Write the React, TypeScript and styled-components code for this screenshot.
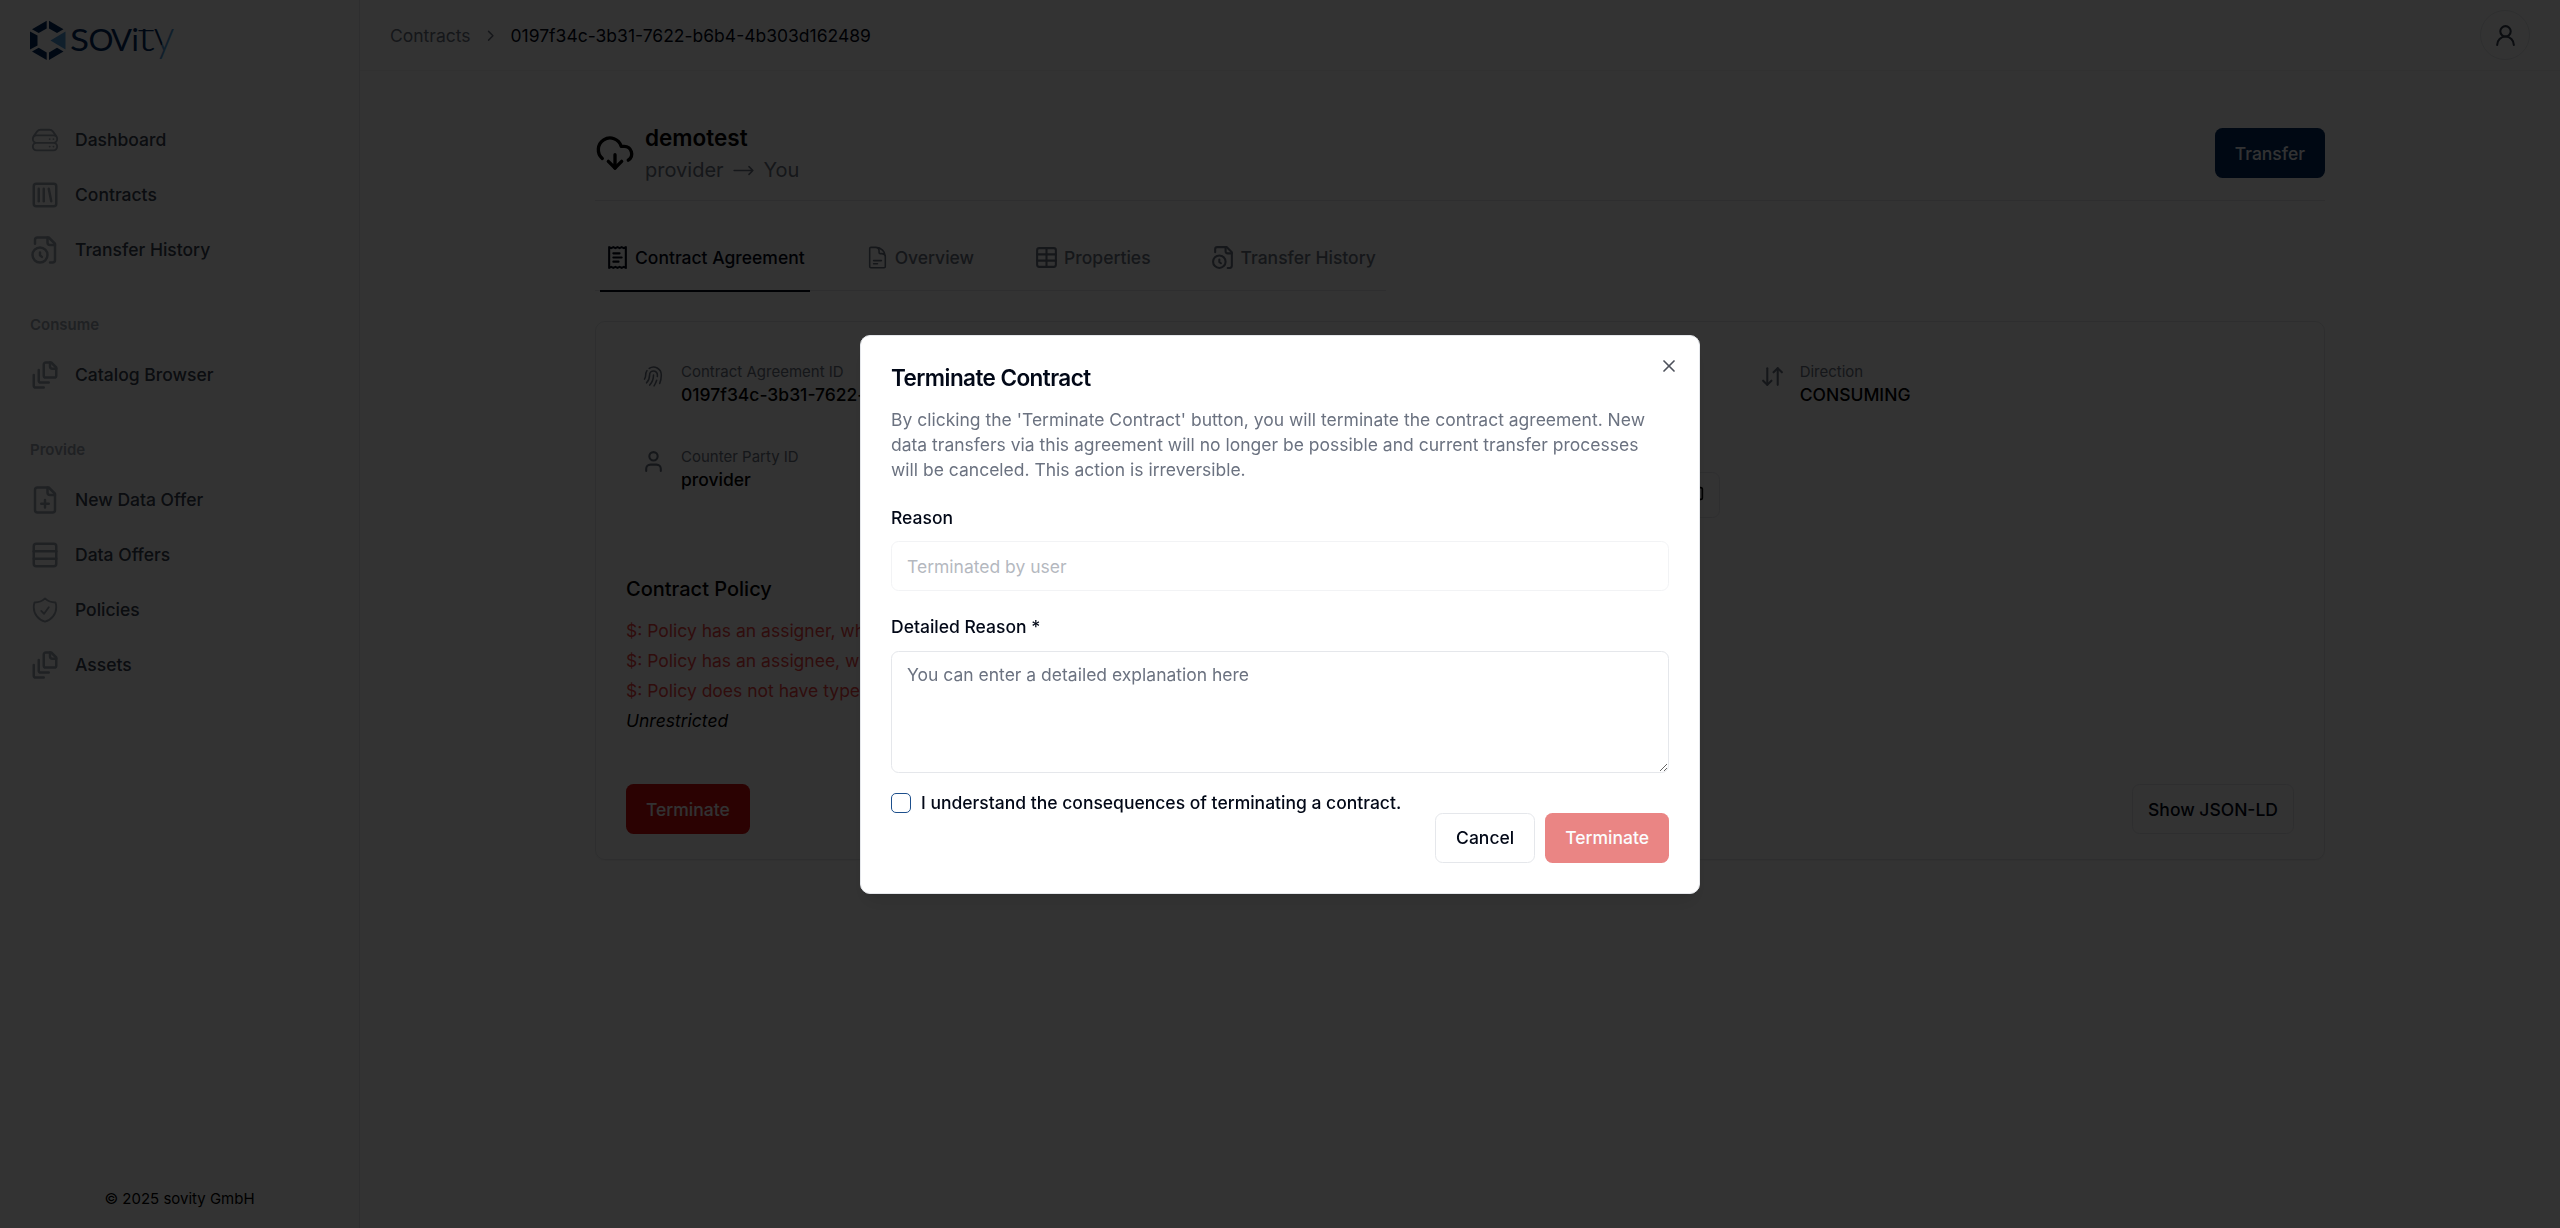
import React from "react";
import styled, { createGlobalStyle, css } from "styled-components";
import {
  ArrowDownUp,
  ChevronRight,
  CloudDownload,
  Copy,
  Rows3,
  SquareLibrary,
  Table,
  User,
  UserRound,
  X,
} from "lucide-react";
import {
  HiOutlineArrowLongRight,
  HiOutlineDocumentText,
  HiOutlineFingerPrint,
  HiOutlineShieldCheck,
} from "react-icons/hi2";

const ink = "#020817";
const muted = "#6b7280";
const line = "#e5e7eb";
const navy = "#002a5e";
const sky = "#4f9ad8";
const danger = "#d50c0a";

const GlobalStyle = createGlobalStyle`
  *, *::before, *::after { box-sizing: border-box; }
  html, body { margin: 0; height: 100%; background: #fff; }
  body {
    font-family: Inter, "Liberation Sans", sans-serif;
    font-size: 17.5px;
    line-height: 25px;
    color: #000;
    overflow: hidden;
  }
  h1, h2, h3, p { margin: 0; font: inherit; }
  button, input, textarea { font: inherit; margin: 0; }
`;

/* ---------- icons ---------- */

const StrokeSvg = ({
  size,
  weight = 2,
  children,
}: {
  size: number;
  weight?: number;
  children: React.ReactNode;
}) => (
  <svg
    width={size}
    height={size}
    viewBox="0 0 24 24"
    fill="none"
    stroke="currentColor"
    strokeWidth={weight}
    strokeLinecap="round"
    strokeLinejoin="round"
  >
    {children}
  </svg>
);

const ServerIcon = ({ size = 30 }) => (
  <StrokeSvg size={size} weight={1.5}>
    <path d="M5.25 14.25h13.5m-13.5 0a3 3 0 0 1-3-3m3 3a3 3 0 1 0 0 6h13.5a3 3 0 1 0 0-6m-16.5-3a3 3 0 0 1 3-3h13.5a3 3 0 0 1 3 3m-19.5 0a4.5 4.5 0 0 1 .9-2.7L5.737 5.1a3.375 3.375 0 0 1 2.7-1.35h7.126c1.062 0 2.062.5 2.7 1.35l2.587 3.45a4.5 4.5 0 0 1 .9 2.7m0 0a3 3 0 0 1-3 3m0 3h.008v.008h-.008v-.008Zm0-6h.008v.008h-.008v-.008Zm-3 6h.008v.008h-.008v-.008Zm0-6h.008v.008h-.008v-.008Z" />
  </StrokeSvg>
);

const FileClockIcon = ({ size = 30 }) => (
  <StrokeSvg size={size}>
    <path d="M16 22h2a2 2 0 0 0 2-2V7l-5-5H6a2 2 0 0 0-2 2v3" />
    <path d="M14 2v4a2 2 0 0 0 2 2h4" />
    <circle cx="8" cy="16" r="6" />
    <path d="M9.5 17.5 8 16.25V14" />
  </StrokeSvg>
);

const FilePlusIcon = ({ size = 30 }) => (
  <StrokeSvg size={size}>
    <path d="M15 2H6a2 2 0 0 0-2 2v16a2 2 0 0 0 2 2h12a2 2 0 0 0 2-2V7Z" />
    <path d="M14 2v4a2 2 0 0 0 2 2h4" />
    <path d="M9 15h6M12 18v-6" />
  </StrokeSvg>
);

const FileStackIcon = ({ size = 30 }) => (
  <StrokeSvg size={size}>
    <path d="M21 7h-3a2 2 0 0 1-2-2V2" />
    <path d="M21 6v6.5c0 .8-.7 1.5-1.5 1.5h-7c-.8 0-1.5-.7-1.5-1.5v-9c0-.8.7-1.5 1.5-1.5H17Z" />
    <path d="M7 8v8.8c0 .3.2.6.4.8.2.2.5.4.8.4H15" />
    <path d="M3 12v8.8c0 .3.2.6.4.8.2.2.5.4.8.4H11" />
  </StrokeSvg>
);

const ReceiptIcon = ({ size = 25 }) => (
  <StrokeSvg size={size}>
    <path d="M4 2v20l2-1 2 1 2-1 2 1 2-1 2 1 2-1 2 1V2l-2 1-2-1-2 1-2-1-2 1-2-1-2 1Z" />
    <path d="M14 8H8M16 12H8M13 16H8" />
  </StrokeSvg>
);

const LogoSvg = styled.svg`
  display: block;
  overflow: visible;
`;

const Logo = () => (
  <LogoSvg width="146" height="42" viewBox="0 0 146 42">
    <defs>
      <linearGradient id="tail" gradientUnits="userSpaceOnUse" x1="130.3" y1="25" x2="132.3" y2="26">
        <stop offset="0" stopColor={navy} />
        <stop offset="0.5" stopColor={navy} />
        <stop offset="0.5" stopColor={sky} />
        <stop offset="1" stopColor={sky} />
      </linearGradient>
      <clipPath id="crossbar">
        <rect x="104" y="9" width="24" height="24" />
      </clipPath>
    </defs>
    <g fill={navy}>
      <path d="M16.7.8V8.4L8.7 13 2 9.2Z" />
      <path d="M19 .8V8.4L27 13l6.5-3.8Z" />
      <path d="M0 11.4 7.5 15.5V25.5L0 29.6Z" />
      <path d="M16.7 40V32.5L8.7 27.7 2 31.6Z" />
      <path d="M19 40V32.5L27 27.7l6.5 3.9Z" />
    </g>
    <path d="M20.5 20.5 35.5 11.4V29.6Z" fill={sky} />
    <g fill={navy} fontFamily="Lato, sans-serif" fontWeight="400">
      <text x="40" y="31" fontSize="30.5" textLength="19" lengthAdjust="spacingAndGlyphs">S</text>
      <text x="58.5" y="31" fontSize="30.5" textLength="25" lengthAdjust="spacingAndGlyphs">O</text>
      <text x="81" y="31" fontSize="30.5" textLength="21" lengthAdjust="spacingAndGlyphs">V</text>
      <text x="101.5" y="31" fontSize="30.5">i</text>
      <text x="107" y="31" fontSize="43" fontWeight="300" clipPath="url(#crossbar)" textLength="18" lengthAdjust="spacingAndGlyphs">t</text>
      <text x="123.5" y="31" fontSize="43" fontWeight="300" fill="url(#tail)" textLength="21" lengthAdjust="spacingAndGlyphs">y</text>
    </g>
  </LogoSvg>
);

/* ---------- shell ---------- */

const Shell = styled.div`
  display: grid;
  grid-template-columns: 360px 1fr;
  height: 1228px;
`;

const Sidebar = styled.aside`
  display: flex;
  flex-direction: column;
  padding: 20px 30px 17px;
  border-right: 1px solid ${line};
`;

const Brand = styled.div`
  height: 42px;
  margin-bottom: 50px;
`;

const NavGroup = styled.nav`
  display: flex;
  flex-direction: column;
  margin-bottom: 37.5px;
`;

const NavLabel = styled.div`
  font-size: 15px;
  line-height: 20px;
  font-weight: 600;
  color: #9ca3af;
  padding-bottom: 12.5px;
`;

const NavItem = styled.a`
  display: flex;
  align-items: center;
  gap: 15px;
  height: 55px;
  font-weight: 500;
  color: #374151;

  svg {
    color: #9ca3af;
  }
`;

const Copyright = styled.div`
  margin-top: auto;
  text-align: center;
  font-size: 15px;
  line-height: 25px;
`;

const Page = styled.div`
  display: flex;
  flex-direction: column;
  min-width: 0;
`;

const TopBar = styled.header`
  display: flex;
  align-items: center;
  justify-content: space-between;
  height: 71px;
  padding: 0 30px;
  border-bottom: 1px solid #f3f4f6;
`;

const Breadcrumb = styled.div`
  display: flex;
  align-items: center;
  gap: 11.25px;
  padding-top: 1px;
  color: ${muted};
`;

const Crumb = styled.span`
  color: ${ink};
`;

const Avatar = styled.div`
  display: grid;
  place-items: center;
  width: 50px;
  height: 50px;
  border: 1px solid ${line};
  border-radius: 50%;
  color: #374151;
`;

const Content = styled.main`
  width: 1730px;
  margin: 0 auto;
  padding-top: 50px;
`;

/* ---------- contract heading ---------- */

const Heading = styled.div`
  display: flex;
  align-items: flex-start;
  height: 80px;
  border-bottom: 1px solid ${line};
`;

const HeadingIcon = styled.div`
  height: 52px;
  padding-top: 11.5px;
`;

const HeadingText = styled.div`
  flex: 1;
  padding: 2px 0 0 10px;
`;

const Title = styled.h1`
  font-size: 22.5px;
  line-height: 30px;
  font-weight: 600;
`;

const Parties = styled.div`
  display: flex;
  align-items: center;
  gap: 7.5px;
  font-size: 20px;
  line-height: 34px;
  color: ${muted};
`;

const Button = styled.button<{
  $tone?: "primary" | "danger" | "outline";
  $padding?: number;
  $top?: number;
  $faded?: boolean;
}>`
  display: inline-flex;
  align-items: center;
  justify-content: center;
  height: 50px;
  padding: 0 ${(p) => p.$padding ?? 20}px;
  border: 0;
  border-radius: 7.5px;
  font-weight: 500;
  color: #f8fafc;
  margin-top: ${(p) => p.$top ?? 0}px;
  opacity: ${(p) => (p.$faded ? 0.5 : 1)};
  ${(p) => p.$tone === "primary" && css`background: ${navy};`}
  ${(p) => p.$tone === "danger" && css`background: ${danger};`}
  ${(p) =>
    p.$tone === "outline" &&
    css`
      background: #fff;
      border: 1px solid ${line};
      color: ${ink};
    `}
`;

/* ---------- tabs ---------- */

const Tabs = styled.div`
  display: flex;
  width: fit-content;
  gap: 50px;
  height: 70px;
  margin-top: 20px;
  padding: 0 5px;
  border-bottom: 1px solid ${line};
`;

const Tab = styled.div<{ $active?: boolean }>`
  display: flex;
  align-items: center;
  gap: 5px;
  height: 71px;
  padding: 4px 5px 0;
  font-weight: 500;
  color: ${(p) => (p.$active ? ink : muted)};
  border-bottom: 2px solid ${(p) => (p.$active ? ink : "transparent")};
`;

/* ---------- agreement card ---------- */

const Card = styled.section`
  display: flex;
  flex-direction: column;
  height: 539px;
  margin-top: 30px;
  padding: 24px 30px 25px;
  border: 1px solid ${line};
  border-radius: 10px;
  box-shadow: 0 1px 2px rgba(0, 0, 0, 0.05);
`;

const Facts = styled.div`
  display: grid;
  grid-template-columns: repeat(3, 1fr);
  grid-auto-rows: 45px;
  gap: 40px;
  padding: 15px;
`;

const Fact = styled.div`
  display: flex;
  gap: 15px;
  color: ${muted};
  min-width: 0;

  > svg {
    margin-top: 3px;
    flex: none;
  }
`;

const FactLabel = styled.div`
  font-size: 15px;
  line-height: 21px;
`;

const FactValue = styled.div`
  font-weight: 500;
  line-height: 25px;
  color: #000;
`;

const Endpoint = styled.div`
  display: flex;
  align-items: center;
  justify-content: flex-end;
  height: 46px;
  margin-top: 26px;
  padding: 0 15px 8px;
  border: 1px solid ${line};
  border-radius: 7.5px;
  color: #000;
`;

const PolicyTitle = styled.h2`
  margin-top: 67.5px;
  padding-bottom: 12.5px;
  font-size: 20px;
  line-height: 30px;
  font-weight: 500;
`;

const PolicyLine = styled.p<{ $error?: boolean }>`
  line-height: 30px;
  color: ${(p) => (p.$error ? "#ef4444" : "#000")};
  font-style: ${(p) => (p.$error ? "normal" : "italic")};
`;

const CardActions = styled.div`
  display: flex;
  justify-content: space-between;
  margin-top: auto;
`;

/* ---------- dialog ---------- */

const Overlay = styled.div`
  position: fixed;
  inset: 0;
  display: grid;
  place-items: center;
  background: rgba(0, 0, 0, 0.8);
`;

const Dialog = styled.div`
  position: relative;
  display: flex;
  flex-direction: column;
  width: 840px;
  height: 559px;
  margin-top: 1px;
  padding: 30px 30px 29px;
  background: #fff;
  border: 1px solid ${line};
  border-radius: 10px;
  box-shadow: 0 12px 19px -4px rgba(0, 0, 0, 0.1), 0 5px 8px -5px rgba(0, 0, 0, 0.1);
  color: ${ink};
`;

const CloseButton = styled.span`
  position: absolute;
  top: 20px;
  right: 20px;
  display: flex;
  opacity: 0.7;
`;

const DialogTitle = styled.h2`
  font-size: 22.5px;
  line-height: 24px;
  font-weight: 600;
  letter-spacing: -0.025em;
`;

const DialogText = styled.p`
  margin-top: 16.5px;
  color: ${muted};
`;

const FieldLabel = styled.label`
  margin: 23.25px 0 11.25px;
  font-weight: 500;
  line-height: 25px;
`;

const fieldBox = css`
  display: block;
  width: 100%;
  padding: 10px 15px;
  border: 1px solid ${line};
  border-radius: 7.5px;
  background: #fff;
  outline: none;

  &::placeholder {
    color: ${muted};
    opacity: 1;
  }
`;

const Input = styled.input`
  ${fieldBox}
  height: 50px;
  opacity: 0.5;
`;

const TextArea = styled.textarea`
  ${fieldBox}
  height: 122px;
  resize: vertical;
`;

const Consent = styled.label`
  display: flex;
  align-items: center;
  gap: 10px;
  height: 20px;
  margin-top: 20px;
  font-weight: 500;
`;

const Checkbox = styled.span`
  width: 20px;
  height: 20px;
  border: 1px solid #1d4f8c;
  border-radius: 5px;
`;

const DialogActions = styled.div`
  display: flex;
  justify-content: flex-end;
  gap: 10px;
`;

const contractId = "0197f34c-3b31-7622-b6b4-4b303d162489";

export default function App() {
  return (
    <>
      <GlobalStyle />
      <Shell>
        <Sidebar>
          <Brand>
            <Logo />
          </Brand>
          <NavGroup>
            <NavItem><ServerIcon />Dashboard</NavItem>
            <NavItem><SquareLibrary size={30} />Contracts</NavItem>
            <NavItem><FileClockIcon />Transfer History</NavItem>
          </NavGroup>
          <NavGroup>
            <NavLabel>Consume</NavLabel>
            <NavItem><FileStackIcon />Catalog Browser</NavItem>
          </NavGroup>
          <NavGroup>
            <NavLabel>Provide</NavLabel>
            <NavItem><FilePlusIcon />New Data Offer</NavItem>
            <NavItem><Rows3 size={30} />Data Offers</NavItem>
            <NavItem><HiOutlineShieldCheck size={30} />Policies</NavItem>
            <NavItem><FileStackIcon />Assets</NavItem>
          </NavGroup>
          <Copyright>© 2025 sovity GmbH</Copyright>
        </Sidebar>

        <Page>
          <TopBar>
            <Breadcrumb>
              Contracts
              <ChevronRight size={17.5} />
              <Crumb>{contractId}</Crumb>
            </Breadcrumb>
            <Avatar>
              <UserRound size={25} />
            </Avatar>
          </TopBar>

          <Content>
            <Heading>
              <HeadingIcon>
                <CloudDownload size={40} />
              </HeadingIcon>
              <HeadingText>
                <Title>demotest</Title>
                <Parties>
                  provider
                  <HiOutlineArrowLongRight size={25} />
                  You
                </Parties>
              </HeadingText>
              <Button $tone="primary" $top={7}>Transfer</Button>
            </Heading>

            <Tabs>
              <Tab $active><ReceiptIcon />Contract Agreement</Tab>
              <Tab><HiOutlineDocumentText size={25} />Overview</Tab>
              <Tab><Table size={25} />Properties</Tab>
              <Tab><FileClockIcon size={25} />Transfer History</Tab>
            </Tabs>

            <Card>
              <Facts>
                <Fact>
                  <HiOutlineFingerPrint size={25} />
                  <div>
                    <FactLabel>Contract Agreement ID</FactLabel>
                    <FactValue>{contractId}</FactValue>
                  </div>
                </Fact>
                <div />
                <Fact>
                  <ArrowDownUp size={25} />
                  <div>
                    <FactLabel>Direction</FactLabel>
                    <FactValue>CONSUMING</FactValue>
                  </div>
                </Fact>
                <Fact>
                  <User size={25} />
                  <div>
                    <FactLabel>Counter Party ID</FactLabel>
                    <FactValue>provider</FactValue>
                  </div>
                </Fact>
                <Endpoint>
                  <Copy size={20} />
                </Endpoint>
              </Facts>

              <PolicyTitle>Contract Policy</PolicyTitle>
              <PolicyLine $error>$: Policy has an assigner, which is currently unsupported.</PolicyLine>
              <PolicyLine $error>$: Policy has an assignee, which is currently unsupported.</PolicyLine>
              <PolicyLine $error>$: Policy does not have type CONTRACT</PolicyLine>
              <PolicyLine>Unrestricted</PolicyLine>

              <CardActions>
                <Button $tone="danger">Terminate</Button>
                <Button $tone="outline" $padding={15}>Show JSON-LD</Button>
              </CardActions>
            </Card>
          </Content>
        </Page>
      </Shell>

      <Overlay>
        <Dialog role="dialog">
          <DialogTitle>Terminate Contract</DialogTitle>
          <DialogText>
            By clicking the 'Terminate Contract' button, you will terminate the contract agreement. New
            data transfers via this agreement will no longer be possible and current transfer processes
            will be canceled. This action is irreversible.
          </DialogText>
          <FieldLabel>Reason</FieldLabel>
          <Input disabled placeholder="Terminated by user" />
          <FieldLabel>Detailed Reason *</FieldLabel>
          <TextArea placeholder="You can enter a detailed explanation here" />
          <Consent>
            <Checkbox />
            I understand the consequences of terminating a contract.
          </Consent>
          <DialogActions>
            <Button $tone="outline">Cancel</Button>
            <Button $tone="danger" $faded>Terminate</Button>
          </DialogActions>
          <CloseButton>
            <X size={20} />
          </CloseButton>
        </Dialog>
      </Overlay>
    </>
  );
}
